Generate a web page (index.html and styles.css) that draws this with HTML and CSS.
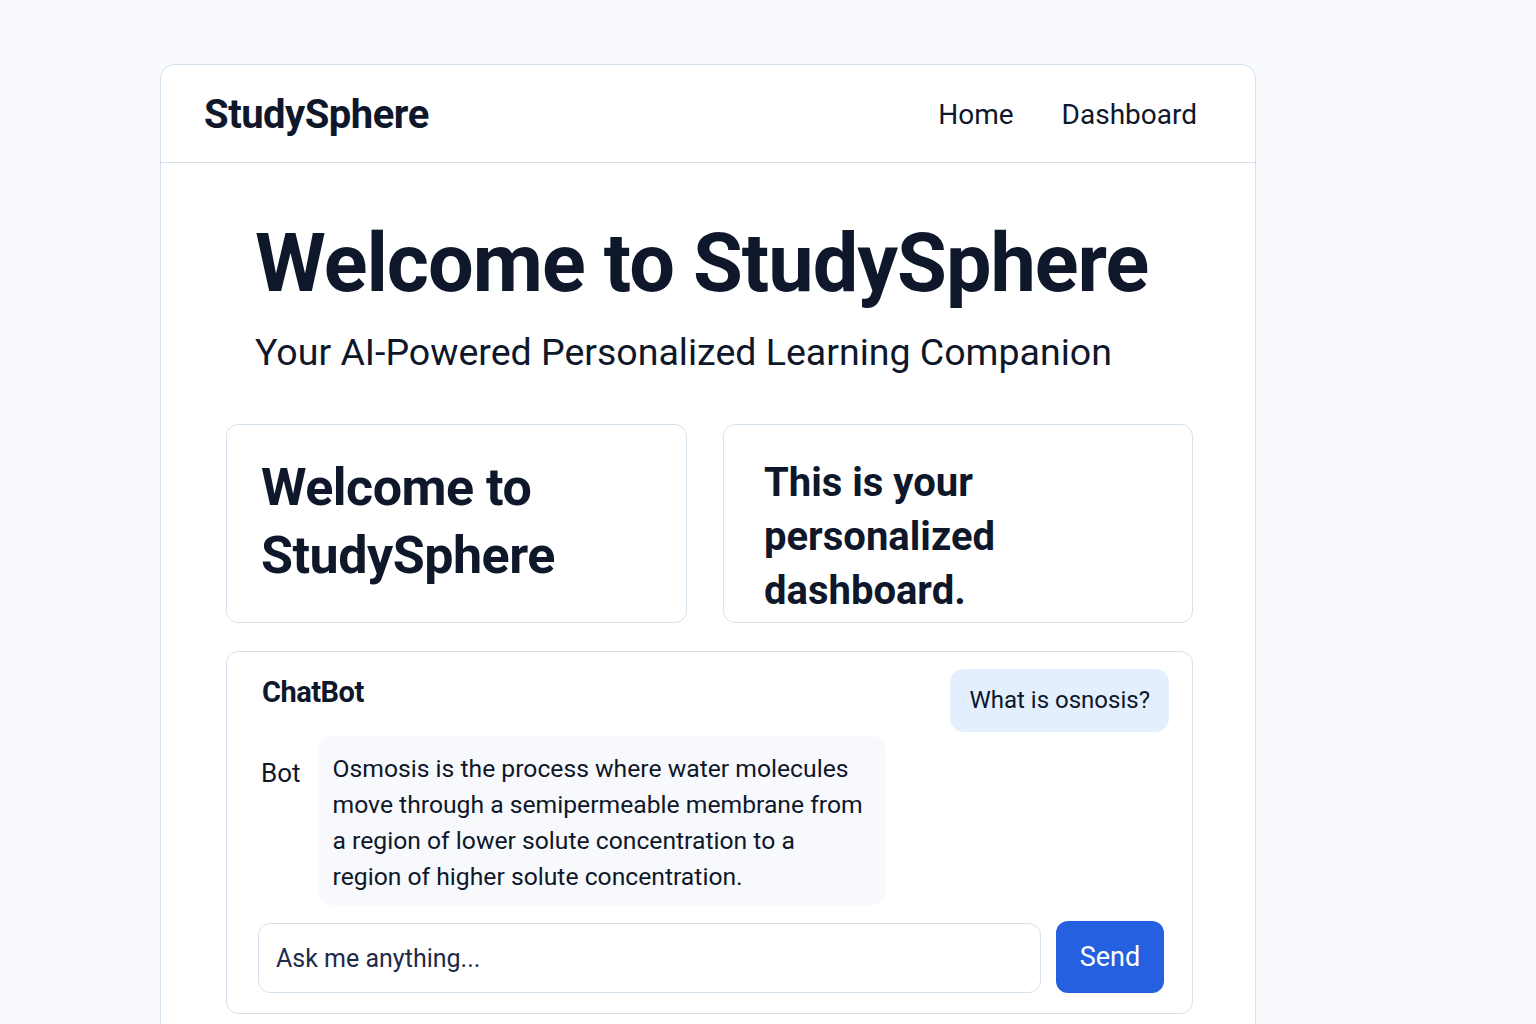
FILE: index.html
```html
<!DOCTYPE html>
<html lang="en">
<head>
    <meta charset="UTF-8">
    <meta name="viewport" content="width=device-width, initial-scale=1.0">
    <title>StudySphere</title>
    <link rel="stylesheet" href="styles.css">
</head>
<body>
    <div class="app">
        <header class="topbar">
            <div class="logo">StudySphere</div>
            <nav class="nav">
                <a href="#">Home</a>
                <a href="#">Dashboard</a>
            </nav>
        </header>
        <main class="content">
            <section class="hero">
                <h1>Welcome to StudySphere</h1>
                <p>Your AI-Powered Personalized Learning Companion</p>
            </section>
            <div class="cards">
                <div class="card card-welcome">
                    <h2>Welcome to StudySphere</h2>
                </div>
                <div class="card card-dash">
                    <h2>This is your personalized dashboard.</h2>
                </div>
            </div>
            <div class="chat">
                <div class="chat-head">
                    <h3>ChatBot</h3>
                    <div class="bubble bubble-user">What is osnosis?</div>
                </div>
                <div class="bot-row">
                    <span class="bot-label">Bot</span>
                    <div class="bubble bubble-bot">Osmosis is the process where water molecules move through a semipermeable membrane from a region of lower solute concentration to a region of higher solute concentration.</div>
                </div>
                <form class="chat-form" onsubmit="return false">
                    <input type="text" placeholder="Ask me anything...">
                    <button type="submit">Send</button>
                </form>
            </div>
        </main>
    </div>
</body>
</html>
```

FILE: styles.css
```css
* {
    box-sizing: border-box;
}
body {
    margin: 0;
    background-color: #f8fafd;
    font-family: Roboto, "Liberation Sans", sans-serif;
    color: #0f172a;
    height: 1024px;
    overflow: hidden;
}
.app {
    margin: 64px 0 0 160px;
    width: 1096px;
    min-height: 1000px;
    background-color: #ffffff;
    border: 1px solid #d6e1ee;
    border-radius: 14px;
}
.topbar {
    height: 98px;
    display: flex;
    align-items: center;
    justify-content: space-between;
    padding: 2px 58px 0 43px;
    border-bottom: 1px solid #d6e1ee;
}
.logo {
    font-size: 40px;
    font-weight: 700;
    letter-spacing: -0.5px;
}
.nav {
    display: flex;
    gap: 48px;
}
.nav a {
    color: #0f172a;
    text-decoration: none;
    font-size: 28px;
}
.content {
    padding: 0 62px 0 65px;
}
.hero {
    padding: 52px 0 0 29px;
}
.hero h1 {
    margin: 0;
    font-size: 81px;
    font-weight: 700;
    line-height: 1.2;
    letter-spacing: -1px;
}
.hero p {
    margin: 18px 0 0;
    font-size: 37.5px;
}
.cards {
    display: grid;
    grid-template-columns: 461px 470px;
    gap: 36px;
    margin-top: 50px;
}
.card {
    height: 199px;
    border: 1px solid #d6e1ee;
    border-radius: 12px;
}
.card h2 {
    margin: 0;
    font-weight: 700;
}
.card-welcome {
    padding: 29px 34px;
}
.card-welcome h2 {
    font-size: 52px;
    line-height: 68px;
    letter-spacing: -0.5px;
}
.card-dash {
    padding: 31px 40px;
}
.card-dash h2 {
    font-size: 40px;
    line-height: 54px;
    width: 300px;
}
.chat {
    margin-top: 28px;
    border: 1px solid #d6e1ee;
    border-radius: 12px;
    padding: 17px 23px 20px 31px;
}
.chat-head {
    display: flex;
    justify-content: space-between;
    align-items: flex-start;
}
.chat-head h3 {
    margin: 6px 0 0 4px;
    font-size: 29px;
    font-weight: 700;
    letter-spacing: -0.5px;
}
.bubble {
    border-radius: 14px;
}
.bubble-user {
    background-color: #e3effd;
    padding: 16px 19px;
    font-size: 24px;
    line-height: 31px;
}
.bot-row {
    display: flex;
    align-items: flex-start;
    margin-top: 4px;
}
.bot-label {
    font-size: 26px;
    margin: 22px 17px 0 3px;
}
.bubble-bot {
    width: 568px;
    background-color: #f7f9fc;
    padding: 15px 20px 10px 15px;
    font-size: 24.7px;
    line-height: 36px;
}
.chat-form {
    display: flex;
    gap: 15px;
    margin-top: 18px;
    padding-right: 5px;
}
.chat-form input {
    flex: 1;
    height: 70px;
    border: 1px solid #d6e1ee;
    border-radius: 12px;
    padding: 0 17px;
    font-family: inherit;
    font-size: 25px;
    color: #1e2a4a;
}
.chat-form input::placeholder {
    color: #1e2a4a;
}
.chat-form button {
    width: 108px;
    height: 72px;
    margin-top: -2px;
    border: none;
    border-radius: 12px;
    background-color: #2560e0;
    color: #ffffff;
    font-family: inherit;
    font-size: 27px;
}
```
